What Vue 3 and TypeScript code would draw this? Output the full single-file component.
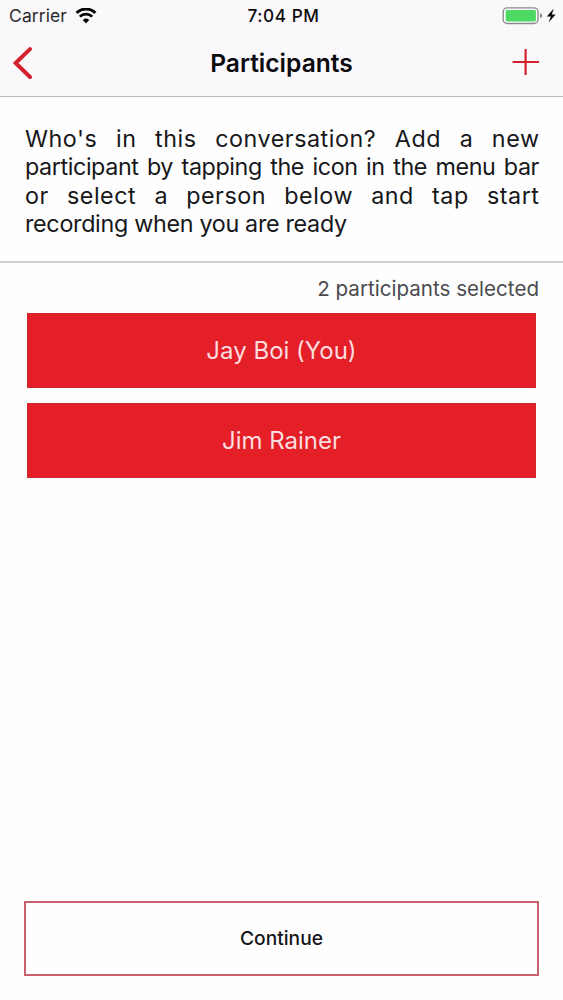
<script setup lang="ts">
interface IntroLine {
  text: string
  kind: 'wide' | 'regular' | 'last'
}

const introLines: IntroLine[] = [
  { text: "Who's in this conversation? Add a new", kind: 'wide' },
  { text: 'participant by tapping the icon in the menu bar', kind: 'regular' },
  { text: 'or select a person below and tap start', kind: 'wide' },
  { text: 'recording when you are ready', kind: 'last' },
]

const participants: string[] = ['Jay Boi (You)', 'Jim Rainer']
</script>

<template>
  <div class="screen">
    <header class="header">
      <div class="status">
        <div class="status-left">
          <span class="carrier">Carrier</span>
          <svg class="wifi" width="22" height="16" viewBox="0 0 22 16">
            <path d="M1.6 4.9A13.4 13.4 0 0 1 20.4 4.9" fill="none" stroke="#050508" stroke-width="3" />
            <path d="M4.8 8.6A8.8 8.8 0 0 1 17.2 8.6" fill="none" stroke="#050508" stroke-width="2.7" />
            <path d="M11 15.4L7.8 12A4.7 4.7 0 0 1 14.2 12Z" fill="#050508" />
          </svg>
        </div>
        <span class="time">7:04 PM</span>
        <div class="status-right">
          <svg class="battery" width="56" height="18" viewBox="0 0 56 18">
            <rect x="1.2" y="0.9" width="34.8" height="15.6" rx="4" fill="#fbfafc" stroke="#8b8b8e" stroke-width="1.4" />
            <rect x="3.7" y="3.1" width="30.2" height="11.4" rx="1.4" fill="#4bd964" />
            <path d="M38 6.1Q40.2 7 40.2 8.7Q40.2 10.4 38 11.3Z" fill="#8b8b8e" />
            <path d="M51.8 1.6L44.8 9.5H48.8L46.6 15.6L53.6 7.6H49.8Z" fill="#0a0a0c" />
          </svg>
        </div>
      </div>
      <div class="nav">
        <button class="icon-button" aria-label="Back">
          <svg width="20" height="34" viewBox="0 0 20 34">
            <path d="M17 3.1L2.6 17L17 31" fill="none" stroke="#d3222e" stroke-width="4" stroke-linecap="round" stroke-linejoin="miter" />
          </svg>
        </button>
        <h1 class="title">Participants</h1>
        <button class="icon-button" aria-label="Add participant">
          <svg width="28" height="28" viewBox="0 0 28 28">
            <path d="M0.6 13H27M13.6 0V26" fill="none" stroke="#d3222e" stroke-width="2.2" />
          </svg>
        </button>
      </div>
    </header>

    <p class="intro">
      <span v-for="line in introLines" :key="line.text" class="intro-line" :class="line.kind">{{ line.text }}</span>
    </p>

    <main class="content">
      <p class="count"><span>{{ participants.length }} participants selected</span></p>
      <ul class="list">
        <li v-for="name in participants" :key="name" class="person">{{ name }}</li>
      </ul>
    </main>

    <footer class="footer">
      <button class="continue">Continue</button>
    </footer>
  </div>
</template>

<style>
body {
  margin: 0;
  background: #fefefe;
}
</style>

<style scoped>
.screen {
  box-sizing: border-box;
  width: 563px;
  height: 1000px;
  display: flex;
  flex-direction: column;
  overflow: hidden;
  background: #fefefe;
  color: #17171a;
  font-family: Inter, "Liberation Sans", sans-serif;
}

button {
  padding: 0;
  border: 0;
  background: none;
  font-family: inherit;
}

svg {
  display: block;
}

.header {
  box-sizing: border-box;
  height: 97px;
  flex: none;
  background: #faf8fb;
  border-bottom: 1px solid #bdbcbf;
}

.status {
  height: 32px;
  display: grid;
  grid-template-columns: 1fr auto 1fr;
  align-items: center;
  padding: 0 5px 0 9px;
}

.status-left {
  display: flex;
  align-items: center;
  gap: 8px;
}

.carrier {
  padding-bottom: 2px;
  font-size: 17.5px;
  letter-spacing: 0.1px;
  color: #29292c;
}

.time {
  padding-bottom: 2px;
  font-size: 17.2px;
  font-weight: 500;
  letter-spacing: 0.55px;
  color: #0c0c0e;
}

.status-right {
  display: flex;
  justify-content: flex-end;
}

.nav {
  height: 62px;
  display: grid;
  grid-template-columns: 28px 1fr 28px;
  align-items: center;
  padding: 0 23px 0 13px;
}

.icon-button {
  width: 28px;
}

.title {
  margin: 0;
  padding: 0 0 0 10px;
  font-size: 24.6px;
  line-height: 30px;
  font-weight: 600;
  text-align: center;
  color: #0b0b0e;
}

.intro {
  box-sizing: border-box;
  height: 166px;
  flex: none;
  margin: 0;
  padding: 28px 24px 0 25px;
  border-bottom: 2px solid #cfcfd1;
  font-size: 23.3px;
  line-height: 28.4px;
}

.intro-line {
  display: block;
  white-space: nowrap;
  text-align: justify;
  text-align-last: justify;
}

.wide {
  letter-spacing: 0.55px;
  margin-right: -0.5px;
}

.regular {
  letter-spacing: -0.4px;
}

.last {
  letter-spacing: -0.3px;
  text-align-last: left;
}

.content {
  flex: 1;
}

.count {
  margin: 0;
  padding: 12px 24px 0 0;
  text-align: right;
  font-size: 20.6px;
  line-height: 28px;
  color: #4b4b4e;
}

.list {
  margin: 0;
  padding: 10px 27px 0;
  list-style: none;
  display: grid;
  gap: 15px;
}

.person {
  box-sizing: border-box;
  height: 75px;
  border: 1px solid #cf2732;
  background: #e41f28;
  color: #fbdcdf;
  font-size: 24px;
  line-height: 73px;
  text-align: center;
}

.footer {
  padding: 0 24px 24px;
}

.continue {
  box-sizing: border-box;
  width: 100%;
  height: 75px;
  display: block;
  padding-bottom: 2px;
  border: 2px solid #c8616b;
  color: #151519;
  font-size: 19.2px;
  font-weight: 500;
}
</style>
